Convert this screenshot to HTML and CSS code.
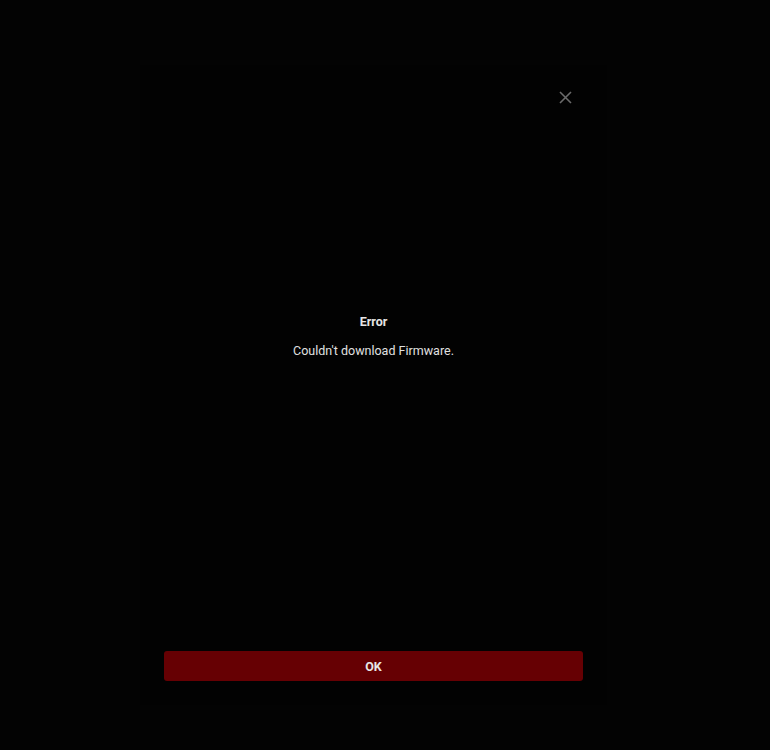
FILE: index.html
```html
<!DOCTYPE html>
<html lang="en">
<head>
<meta charset="utf-8">
<title>Error</title>
<link rel="stylesheet" href="styles.css">
</head>
<body>
<div class="screen">
  <div class="modal">
    <div class="modal-head">
      <button class="close" aria-label="Close">
        <svg width="13" height="13" viewBox="0 0 13 13"><path d="M1 1L12 12M12 1L1 12" stroke="#6b6b6b" stroke-width="1.6" fill="none"/></svg>
      </button>
    </div>
    <div class="modal-body">
      <div class="title">Error</div>
      <div class="message">Couldn't download Firmware.</div>
    </div>
    <button class="ok">OK</button>
  </div>
</div>
</body>
</html>
```

FILE: styles.css
```css
html, body {
  margin: 0;
  padding: 0;
  background: #030303;
}
.screen {
  width: 770px;
  height: 750px;
  background: #030303;
  font-family: Roboto, "Liberation Sans", Arial, sans-serif;
  overflow: hidden;
}
.modal {
  margin: 65px 0 0 140px;
  width: 467px;
  height: 640px;
  padding: 0 24px 24px;
  box-sizing: border-box;
  background: #020202;
  display: flex;
  flex-direction: column;
}
.modal-head {
  display: flex;
  justify-content: flex-end;
  padding-top: 26px;
  padding-right: 11px;
}
.close {
  background: none;
  border: 0;
  padding: 0;
  width: 13px;
  height: 13px;
  display: block;
  cursor: pointer;
}
.close svg { display: block; }
.modal-body {
  margin-top: 210px;
  display: flex;
  flex-direction: column;
  align-items: center;
  color: #e6e6e6;
  font-size: 12.5px;
  line-height: 16px;
}
.title {
  font-weight: 700;
}
.message {
  margin-top: 13px;
  color: #e0e0e0;
}
.ok {
  margin-top: auto;
  height: 30px;
  width: 100%;
  border: 0;
  border-radius: 3px;
  background: #660003;
  color: #e6e6e6;
  font-family: Roboto, "Liberation Sans", Arial, sans-serif;
  font-weight: 700;
  font-size: 12.5px;
  cursor: pointer;
}
```
